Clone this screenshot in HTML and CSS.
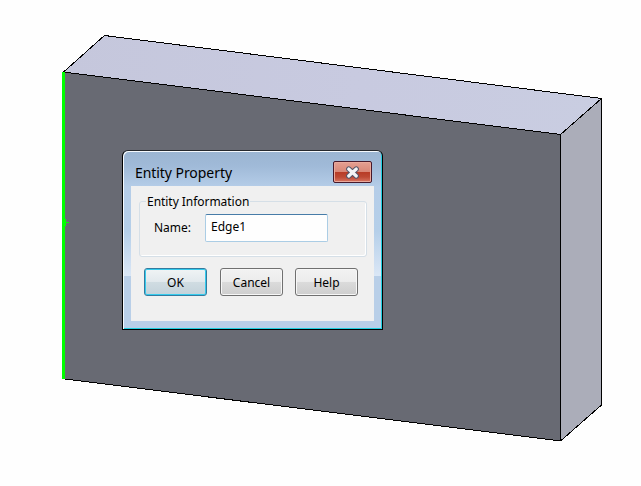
FILE: index.html
```html
<!DOCTYPE html>
<html lang="en">
<head>
<meta charset="utf-8">
<title>Entity Property</title>
<link rel="stylesheet" href="styles.css">
</head>
<body>
<main class="viewport">
  <svg class="model" width="641" height="486" viewBox="0 0 641 486" shape-rendering="crispEdges" aria-hidden="true">
    <defs>
      <linearGradient id="top-face" x1="0" x2="1"><stop offset="0" stop-color="#c5c7dc"/><stop offset=".55" stop-color="#c8cae0"/><stop offset="1" stop-color="#c9cde1"/></linearGradient>
    </defs>
    <path d="M63.500 72 104.500 35.500 601.500 98.500 560.500 134.500Z" fill="url(#top-face)"/>
    <path d="M63.500 72 560.500 134.500V441L64.500 379Z" fill="#686a73"/>
    <path d="M560.500 134.500 601.500 98.500V405L560.500 441Z" fill="#abadb9"/>
    <path class="edges" d="M63.500 72 104.500 35.500 601.500 98.500V405L560.500 441 64.500 379M63.500 72 560.500 134.500V441M560.500 134.500 601.500 98.500"/>
    <path d="M62 72h3v147h1v3h3v1h-3v3h-1v153h-3Z" fill="#00ff00"/>
  </svg>
  <section class="dialog" role="dialog" aria-labelledby="title">
    <header class="titlebar">
      <h1 id="title" class="title">Entity Property</h1>
      <button class="close" aria-label="Close">
        <svg width="15" height="13" viewBox="0 0 15 13" aria-hidden="true">
          <path class="cross-outline" d="M3.700 3 11.300 10M11.300 3 3.700 10"/>
          <path class="cross" d="M3.700 3 11.300 10M11.300 3 3.700 10"/>
        </svg>
      </button>
    </header>
    <form class="client">
      <fieldset class="group">
        <legend class="legend">Entity Information</legend>
        <label class="field"><span class="label">Name:</span><input class="input" value="Edge1" spellcheck="false"></label>
      </fieldset>
      <div class="actions">
        <button type="button" class="button primary">OK</button>
        <button type="button" class="button cancel">Cancel</button>
        <button type="button" class="button">Help</button>
      </div>
    </form>
  </section>
</main>
</body>
</html>
```
FILE: styles.css
```css
* { box-sizing: border-box; }
body { margin: 0; background: #fefefe; color: #000; font-family: "Noto Sans", "Open Sans", sans-serif; font-size: 12px; }
.viewport { position: relative; width: 641px; height: 486px; overflow: hidden; }
.model { display: block; }
.edges { fill: none; stroke: #000; stroke-width: 1; }
.dialog {
  position: absolute; left: 122px; top: 150px; width: 261px; height: 180px;
  padding: 0 7px 7px; border: 1px solid #000; border-top-color: #25282d; border-radius: 6px 6px 0 0;
  background:
    linear-gradient(#b9cfe8, #b9cfe8) 0 125px / 100% 60px no-repeat,
    linear-gradient(#9bb5d2 0, #a0bad8 15px, #b5cde8 36px, #b5cfe9 80px, #dbe7f6 125px);
  box-shadow: inset 1px 1px #f5f9fd, inset -1px -1px #20cfe0;
}
.titlebar { display: flex; justify-content: space-between; height: 35px; margin: 0 1px; padding: 10px 2px 0 4px; }
.title { margin: 0; font-size: 14px; line-height: 24px; font-weight: 400; letter-spacing: -.06px; }
.close {
  display: grid; place-items: center; width: 39px; height: 22px; padding: 0;
  border: 1px solid #46192b; border-radius: 2px;
  background: linear-gradient(#e4a092, #d98878 48%, #b83b26 50%, #bd4934 75%, #d97562);
  box-shadow: inset 0 0 0 1px #eaa99c;
}
.cross-outline, .cross { fill: none; stroke-linecap: round; }
.cross-outline { stroke: #53566a; stroke-width: 5.2; }
.cross { stroke: #f4f4f5; stroke-width: 3.2; }
.client { height: 135px; margin: 0 1px; padding: 7px 7px 0 8px; background: #f0f0f0; }
.group { display: block; min-width: 0; width: 228px; height: 64px; margin: 0 0 11px; padding: 0 8px; border: 1px solid #d5dfe7; border-radius: 3px; box-shadow: inset -1px -1px #fff; }
.legend { height: 16px; margin-left: -2px; padding: 0 1px; line-height: 18px; letter-spacing: -.04px; }
.field { display: flex; padding: 5px 0 0 6px; }
.label { width: 51px; line-height: 27px; }
.input { width: 123px; height: 28px; padding: 0 5px 3px; border: 1px solid #abcde5; border-top-color: #477ca8; border-radius: 2px; outline: 0; background: #fefefe; color: #000; font: inherit; }
.actions { display: flex; margin-left: 5px; }
.button { width: 63px; height: 28px; margin: 0 0 0 12px; padding: 1px 0 0; border: 1px solid #707070; border-radius: 3px; background: linear-gradient(#f2f2f2, #ececec 48%, #dbdbdb 50%, #cecece); box-shadow: inset 0 0 0 1px #f7f7f7; color: #000; font: inherit; }
.primary { margin-left: 0; border-color: #347b9f; background: linear-gradient(#f0f4f5, #e2e9ed 48%, #d0dce2 50%, #c3d2da); box-shadow: inset 0 0 0 1px #35cbed; }
.cancel { margin-left: 13px; }
```
